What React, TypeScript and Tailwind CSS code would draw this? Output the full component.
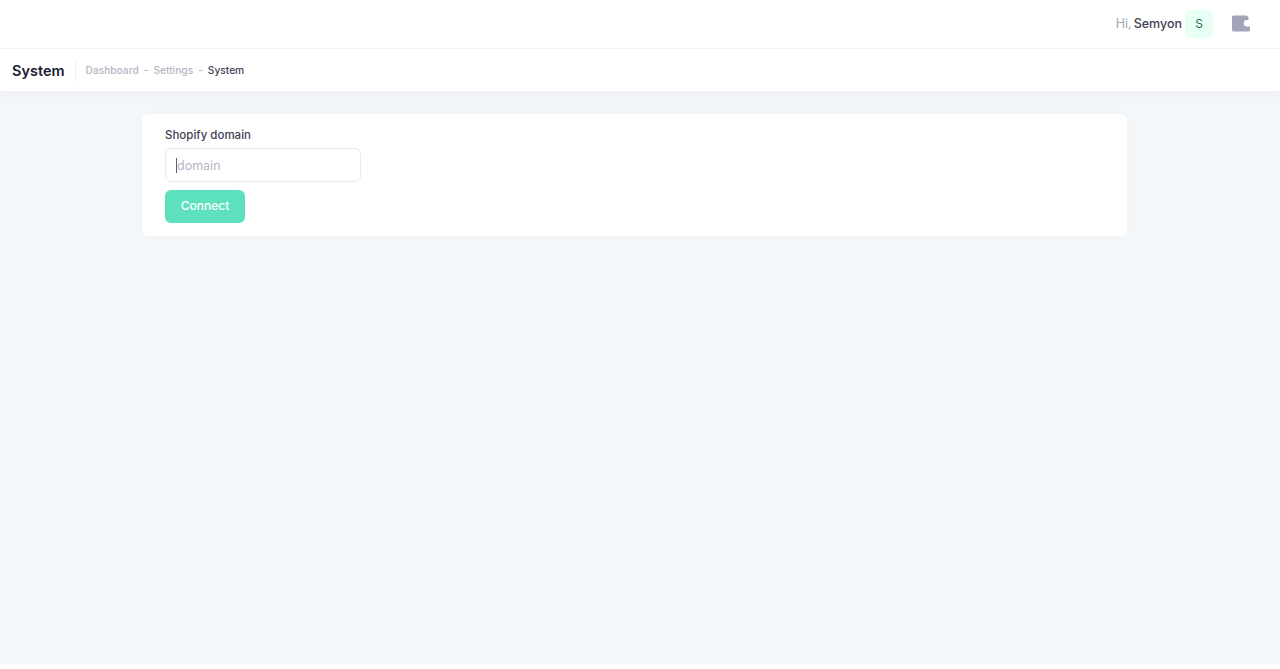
export default function App() {
  return (
    <div className="h-[669px] overflow-hidden bg-white flex flex-col font-['Inter',sans-serif]">
      {/* Top bar */}
      <header className="h-[49px] flex-shrink-0 bg-white border-b border-[#f3f3f6] flex items-center justify-end pl-4 pr-[30px]">
        <span className="text-[12.5px] text-[#a1a5b7] mr-[2px]">Hi,</span>
        <span className="text-[12.5px] font-medium text-[#3f4254]">Semyon</span>
        <div className="w-[28px] h-[28px] ml-[3px] rounded-md bg-[#e8fff3] text-[#2f6f55] text-[12px] flex items-center justify-center">
          S
        </div>
        <svg className="ml-[19px] mb-[2px]" width="18" height="17" viewBox="0 0 18 17">
          <path
            d="M1.5 0.5h13l2 1.5v3h1.5v0h-3a3.2 3.2 0 0 0 0 6.4h3v3.6a1.5 1.5 0 0 1-1.5 1.5H1.5A1.5 1.5 0 0 1 0 15V2A1.5 1.5 0 0 1 1.5 0.5z"
            fill="#a1a5b7"
          />
        </svg>
      </header>

      {/* Toolbar */}
      <div className="h-[42px] flex-shrink-0 bg-white shadow-[0_2px_6px_rgba(82,63,105,0.05)] z-10 flex items-center pl-3 pt-px">
        <h1 className="text-[14.5px] font-semibold text-[#181c32] pr-[10px] border-r border-[#eff2f5] leading-[22px]">System</h1>
        <ul className="flex items-center pl-[10px] text-[10.2px] font-medium text-[#b5b5c3]">
          <li>Dashboard</li>
          <li className="mx-[5px]">-</li>
          <li>Settings</li>
          <li className="mx-[5px]">-</li>
          <li className="text-[#3f4254]">System</li>
        </ul>
      </div>

      {/* Content */}
      <main className="flex-1 bg-[#f4f7fa] pt-[23px] pl-[142px]">
        <div className="w-[985px] h-[122px] bg-white rounded-md px-[23px] pt-3 shadow-[0_0_4px_rgba(82,63,105,0.03)]">
          <label className="block text-[11.5px] leading-[18px] font-medium text-[#3f4254]">Shopify domain</label>
          <div className="mt-[4px] w-[196px] h-[34px] border border-[#e8eaf1] rounded-md flex items-center pl-[10px] text-[12.5px] leading-[18px] text-[#b5b5c3]">
            <span className="w-px h-[15px] bg-[#5e6278]" />
            <span className="pt-[2px]">domain</span>
          </div>
          <button className="mt-2 w-[80px] h-[33px] pb-[2px] rounded-md bg-[#5ce0bd] text-white text-[12px] font-medium flex items-center justify-center">
            Connect
          </button>
        </div>
      </main>
      <div className="h-[5px] flex-shrink-0 bg-white" />
    </div>
  );
}
